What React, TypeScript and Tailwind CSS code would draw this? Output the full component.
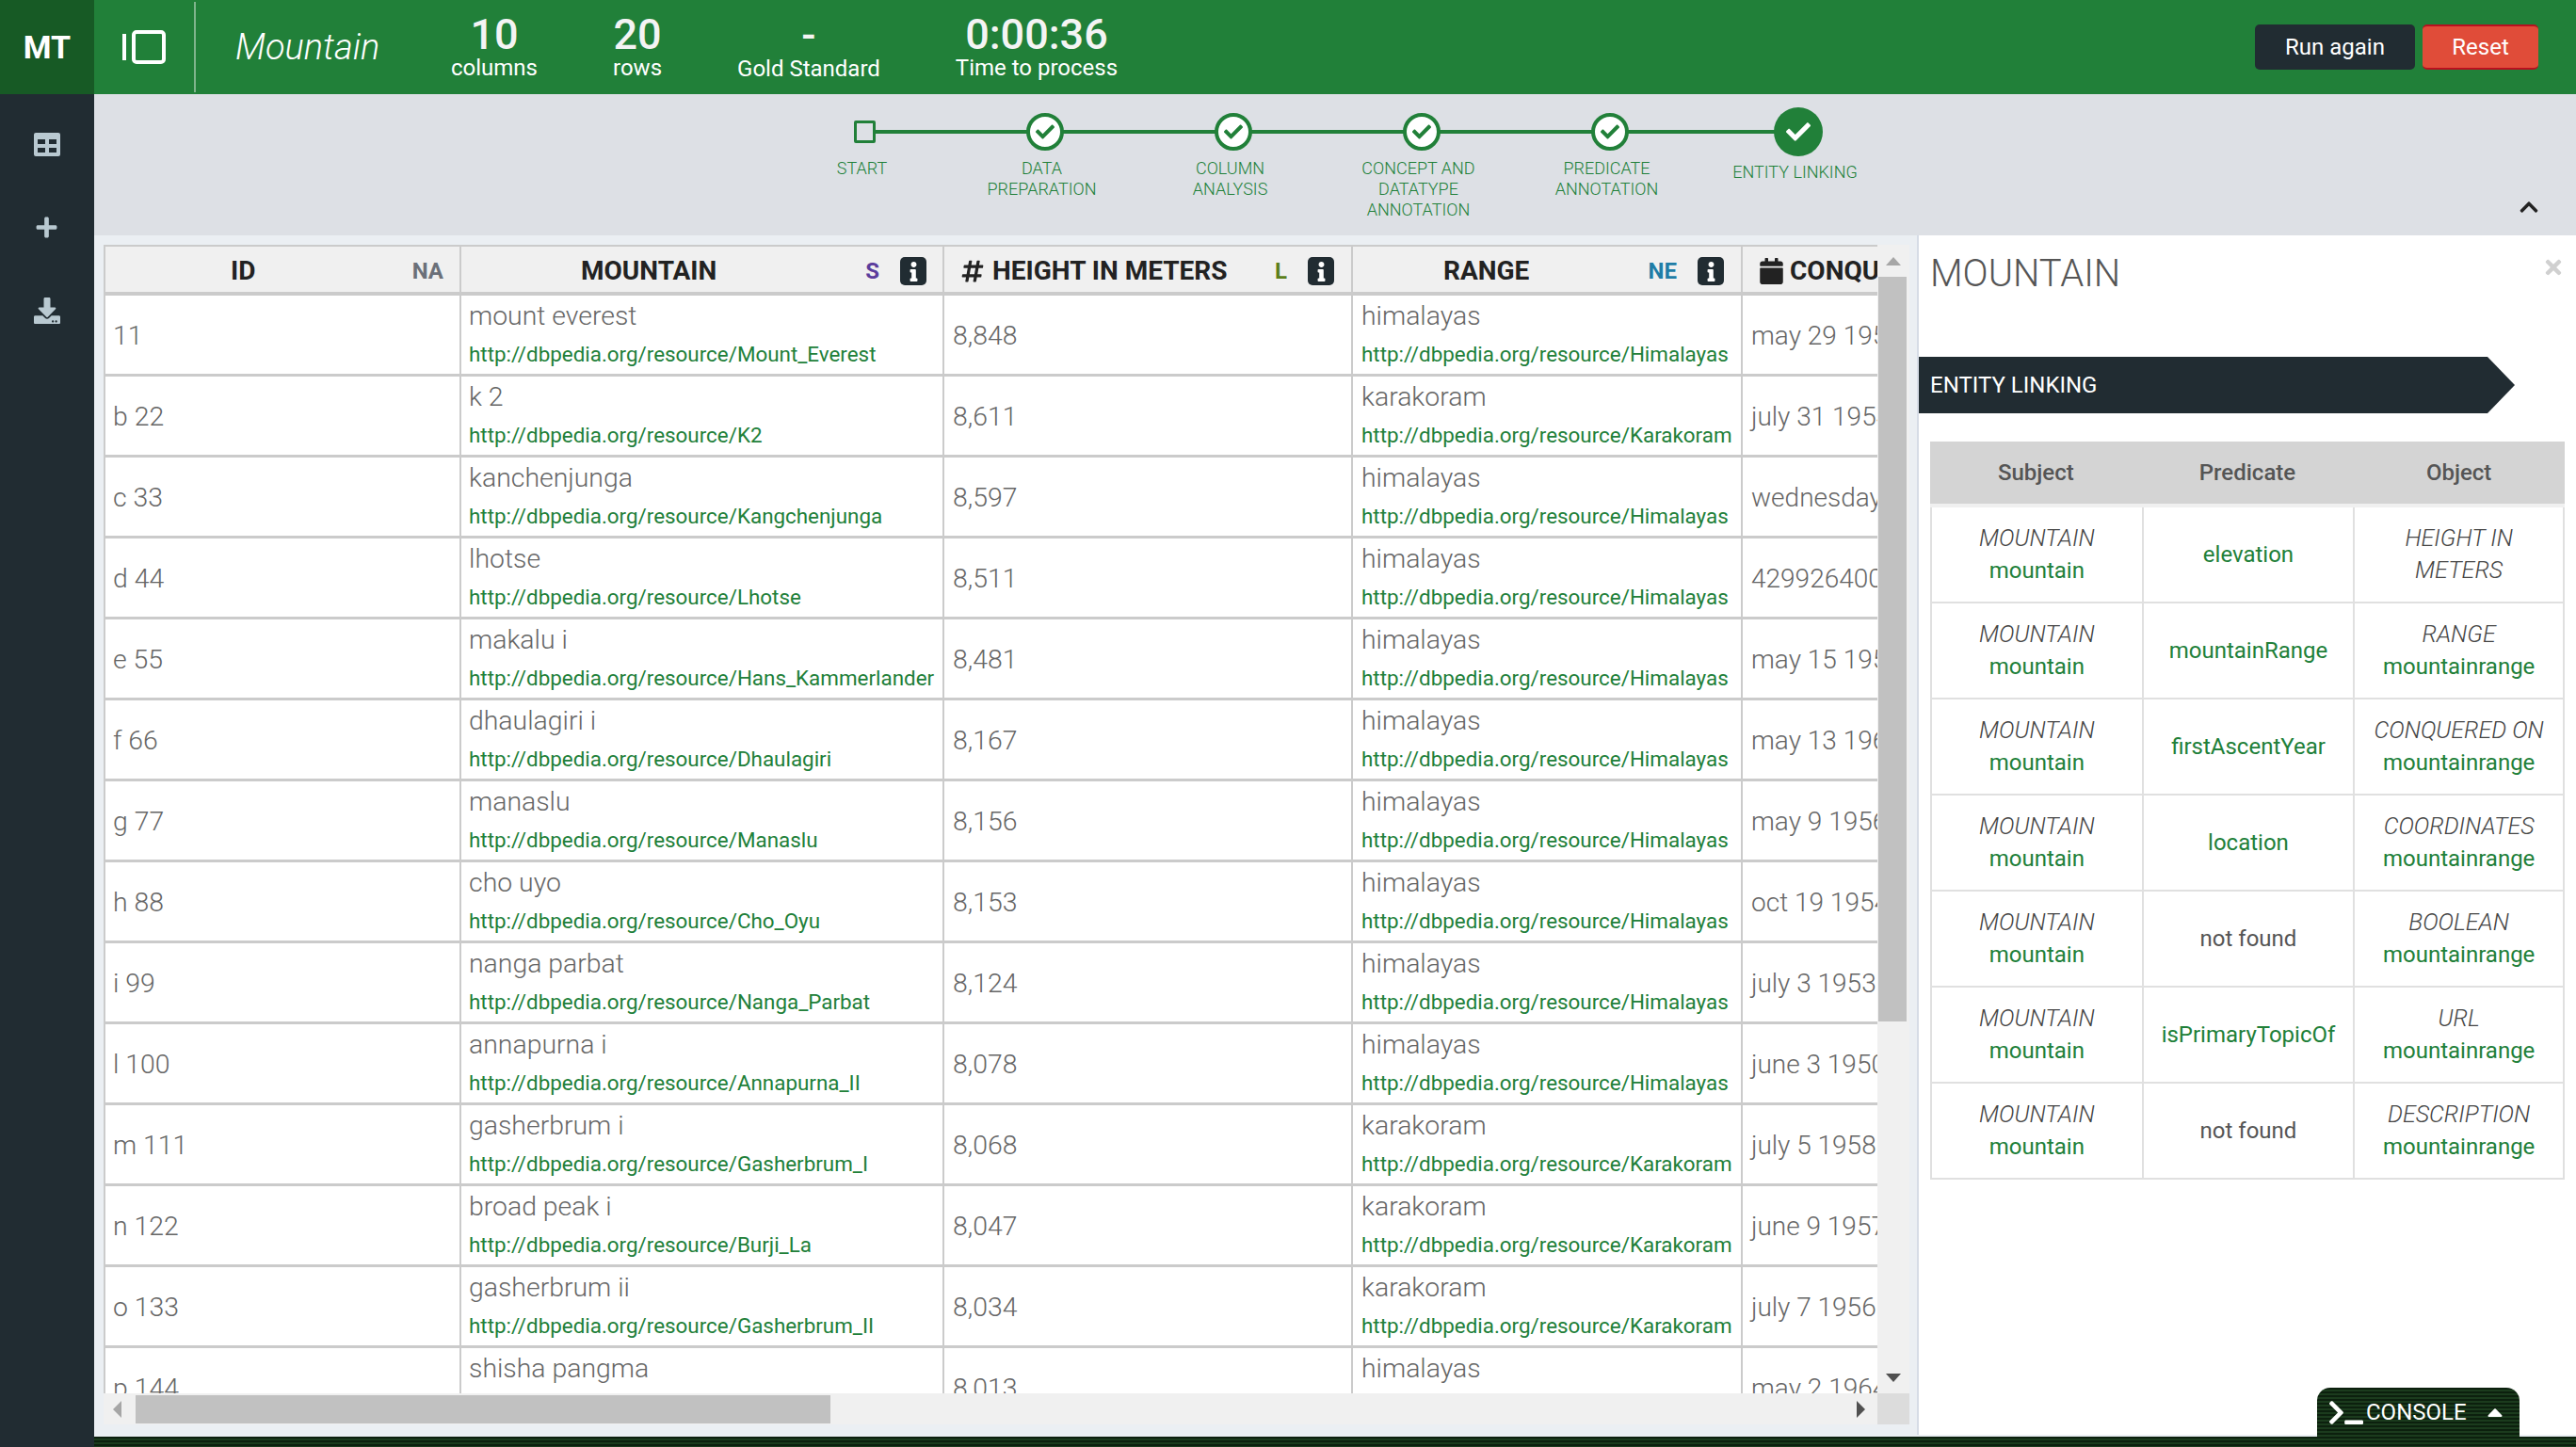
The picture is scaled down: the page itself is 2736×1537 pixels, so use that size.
import { FaCalendar, FaCaretUp, FaCheck, FaChevronUp, FaDownload, FaHashtag, FaInfo, FaPlus, FaTerminal, FaTimes } from "react-icons/fa";

const stats = [
  { value: "10", label: "columns" },
  { value: "20", label: "rows" },
  { value: "-", label: "Gold Standard" },
  { value: "0:00:36", label: "Time to process" },
];

const steps = [
  { label: "START", done: false },
  { label: "DATA\nPREPARATION", done: true },
  { label: "COLUMN\nANALYSIS", done: true },
  { label: "CONCEPT AND\nDATATYPE\nANNOTATION", done: true },
  { label: "PREDICATE\nANNOTATION", done: true },
  { label: "ENTITY LINKING", done: true },
];

const RES = "http://dbpedia.org/resource/";

const rows = [
  ["11", "mount everest", "Mount_Everest", "8,848", "himalayas", "Himalayas", "may 29 1953"],
  ["b 22", "k 2", "K2", "8,611", "karakoram", "Karakoram", "july 31 1954"],
  ["c 33", "kanchenjunga", "Kangchenjunga", "8,597", "himalayas", "Himalayas", "wednesday may 25"],
  ["d 44", "lhotse", "Lhotse", "8,511", "himalayas", "Himalayas", "429926400000"],
  ["e 55", "makalu i", "Hans_Kammerlander", "8,481", "himalayas", "Himalayas", "may 15 1955"],
  ["f 66", "dhaulagiri i", "Dhaulagiri", "8,167", "himalayas", "Himalayas", "may 13 1960"],
  ["g 77", "manaslu", "Manaslu", "8,156", "himalayas", "Himalayas", "may 9 1956"],
  ["h 88", "cho uyo", "Cho_Oyu", "8,153", "himalayas", "Himalayas", "oct 19 1954"],
  ["i 99", "nanga parbat", "Nanga_Parbat", "8,124", "himalayas", "Himalayas", "july 3 1953"],
  ["l 100", "annapurna i", "Annapurna_II", "8,078", "himalayas", "Himalayas", "june 3 1950"],
  ["m 111", "gasherbrum i", "Gasherbrum_I", "8,068", "karakoram", "Karakoram", "july 5 1958"],
  ["n 122", "broad peak i", "Burji_La", "8,047", "karakoram", "Karakoram", "june 9 1957"],
  ["o 133", "gasherbrum ii", "Gasherbrum_II", "8,034", "karakoram", "Karakoram", "july 7 1956"],
  ["p 144", "shisha pangma", "Shishapangma", "8,013", "himalayas", "Himalayas", "may 2 1964"],
];

const links = [
  { object: "HEIGHT IN METERS", predicate: "elevation", type: "" },
  { object: "RANGE", predicate: "mountainRange", type: "mountainrange" },
  { object: "CONQUERED ON", predicate: "firstAscentYear", type: "mountainrange" },
  { object: "COORDINATES", predicate: "location", type: "mountainrange" },
  { object: "BOOLEAN", predicate: "", type: "mountainrange" },
  { object: "URL", predicate: "isPrimaryTopicOf", type: "mountainrange" },
  { object: "DESCRIPTION", predicate: "", type: "mountainrange" },
];

const stripes =
  "bg-[repeating-linear-gradient(to_bottom,#0c200e_0,#0c200e_2px,#1b3b1d_2px,#1b3b1d_4px)]";

const headCell = "h-[54px] border-t-2 border-r-2 border-b-[4px] border-[#cbcbcb] bg-[#f0f0f0] p-0";
const bodyCell = "h-[86px] border-r-2 border-b-[3px] border-[#cbcbcb] bg-white text-[28.4px] font-light text-[#666]";
const nameLine = "mt-[4px] leading-[36px]";
const linkLine = "mt-[7px] text-[22.4px] leading-[30px] font-normal whitespace-nowrap text-[#218039]";

function InfoBadge() {
  return (
    <span className="flex h-[30px] w-[28px] items-center justify-center rounded-[5px] bg-[#212c32] text-white">
      <FaInfo className="h-[21px] w-[21px]" />
    </span>
  );
}

function TableIcon() {
  return (
    <svg width="28" height="25" viewBox="0 0 28 25" aria-hidden>
      <path
        fillRule="evenodd"
        fill="#b9c9d1"
        d="M2 0h24a2 2 0 0 1 2 2v21a2 2 0 0 1-2 2H2a2 2 0 0 1-2-2V2a2 2 0 0 1 2-2zM4 7v5h8V7zm12 0v5h8V7zM4 16v5h8v-5zm12 0v5h8v-5z"
      />
    </svg>
  );
}

function Topbar() {
  return (
    <header className="flex h-[100px] items-center bg-[#218039] text-white">
      <div className="flex h-full w-[100px] items-center justify-center bg-[#175a25] text-[34px] font-bold">MT</div>
      <div className="flex h-full w-[108px] items-center">
        <span className="ml-[30px] h-[28px] w-[4px] bg-white" />
        <span className="ml-[6px] h-[36px] w-[36px] rounded-[5px] border-[4px] border-white" />
        <span className="ml-auto h-[96px] w-[2px] bg-[#7fb48c]" />
      </div>
      <div className="ml-[42px] w-[229px] text-[38px] font-light italic">Mountain</div>
      <div className="flex gap-[80px] pb-[4px]">
        {stats.map((s) => (
          <div key={s.label} className="flex flex-col items-center">
            <span className="h-[48px] text-[45px] leading-[50px] font-medium text-[#f4f4f4]">{s.value}</span>
            <span className={`text-[24px] leading-[24px] ${s.value === "-" ? "mt-[1px]" : ""}`}>{s.label}</span>
          </div>
        ))}
      </div>
      <div className="ml-auto flex gap-[8px] pr-[40px] text-[24px]">
        <button className="h-[48px] w-[170px] rounded-[5px] bg-[#212c32]">Run again</button>
        <button className="h-[48px] w-[123px] rounded-[5px] border-y-2 border-[#b8101f] bg-[#e04c39]">Reset</button>
      </div>
    </header>
  );
}

function Stepper() {
  return (
    <div className="relative h-[150px] bg-[#dde0e5]">
      <div className="absolute top-[14px] left-[719px] flex text-[#218039]">
        <div className="absolute top-[24px] left-[100px] h-[4px] w-[992px] bg-[#218039]" />
        {steps.map((step, i) => (
          <div key={step.label} className={`relative flex w-[200px] flex-col items-center ${i === 0 ? "mr-[-9px]" : ""}`}>
            <div className="flex h-[52px] items-center">
              {i === 0 && <span className="mr-[2px] h-[24px] w-[23px] rounded-[2px] border-[3px] border-[#218039] bg-[#dde0e5]" />}
              {i > 0 && i < 5 && (
                <span className="flex h-[40px] w-[40px] items-center justify-center rounded-full border-[4px] border-[#218039] bg-white">
                  <FaCheck className="h-[20px] w-[20px]" />
                </span>
              )}
              {i === 5 && (
                <span className="flex h-[52px] w-[52px] items-center justify-center rounded-full bg-[#218039] text-white">
                  <FaCheck className="h-[26px] w-[26px]" />
                </span>
              )}
            </div>
            <div className={`pr-[7px] text-center text-[18px] leading-[22px] font-light whitespace-pre-line ${i === 5 ? "mt-[6px]" : "mt-[2px]"}`}>
              {step.label}
            </div>
          </div>
        ))}
      </div>
      <FaChevronUp className="absolute right-[39px] bottom-[19px] h-[22px] w-[22px] text-[#222]" />
    </div>
  );
}

function DataTable() {
  return (
    <table className="w-[2161px] table-fixed border-separate border-spacing-0">
      <colgroup>
        <col className="w-[380px]" />
        <col className="w-[513px]" />
        <col className="w-[434px]" />
        <col className="w-[414px]" />
        <col className="w-[420px]" />
      </colgroup>
      <thead>
        <tr className="text-[28px] font-medium text-[#222]">
          <th className={`${headCell} border-l-2`}>
            <div className="flex items-center pt-[4px] pr-[17px] pl-[133px]">
              <span className="w-[24px] text-center">ID</span>
              <span className="ml-auto text-[24px] text-[#6b7079]">NA</span>
            </div>
          </th>
          <th className={headCell}>
            <div className="flex items-center pt-[4px] pr-[17px] pl-[127px]">
              <span>MOUNTAIN</span>
              <span className="ml-auto text-[24px] text-[#5b3d9c]">S</span>
              <span className="ml-[22px]"><InfoBadge /></span>
            </div>
          </th>
          <th className={headCell}>
            <div className="flex items-center pt-[4px] pr-[18px] pl-[18px]">
              <FaHashtag className="h-[26px] w-[24px] shrink-0" />
              <span className="ml-[9px]">HEIGHT IN METERS</span>
              <span className="ml-auto text-[24px] text-[#5c7f1b]">L</span>
              <span className="ml-[22px]"><InfoBadge /></span>
            </div>
          </th>
          <th className={headCell}>
            <div className="flex items-center pt-[4px] pr-[18px] pl-[96px]">
              <span>RANGE</span>
              <span className="ml-auto text-[24px] text-[#1f7da6]">NE</span>
              <span className="ml-[22px]"><InfoBadge /></span>
            </div>
          </th>
          <th className={headCell}>
            <div className="flex items-center gap-[7px] pt-[4px] pl-[18px] text-left">
              <FaCalendar className="h-[28px] w-[25px] shrink-0" />
              <span>CONQUERED ON</span>
            </div>
          </th>
        </tr>
      </thead>
      <tbody>
        {rows.map((r) => (
          <tr key={r[0]}>
            <td className={`${bodyCell} border-l-2 px-[8px] pt-[3px]`}>{r[0]}</td>
            <td className={`${bodyCell} px-[8px] align-top`}>
              <div className={nameLine}>{r[1]}</div>
              <div className={linkLine}>{RES + r[2]}</div>
            </td>
            <td className={`${bodyCell} px-[9px] pt-[3px]`}>{r[3]}</td>
            <td className={`${bodyCell} px-[9px] align-top`}>
              <div className={nameLine}>{r[4]}</div>
              <div className={linkLine}>{RES + r[5]}</div>
            </td>
            <td className={`${bodyCell} px-[9px] pt-[3px] whitespace-nowrap`}>
              <span className="text-[28px]">{r[6]}</span>
            </td>
          </tr>
        ))}
      </tbody>
    </table>
  );
}

function TablePane() {
  return (
    <div className="flex w-[1936px] shrink-0 flex-col pt-[10px] pl-[10px]">
      <div className="flex h-[1220px]">
        <div className="w-[1884px] overflow-hidden">
          <DataTable />
        </div>
        <div className="flex w-[34px] flex-col items-center bg-[#f0f0f0]">
          <div className="flex h-[34px] items-center justify-center">
            <span className="h-0 w-0 border-x-[8px] border-b-[9px] border-x-transparent border-b-[#a6a6a6]" />
          </div>
          <div className="mr-[2px] h-[791px] w-[30px] bg-[#c1c1c1]" />
          <div className="mt-auto flex h-[34px] items-center justify-center">
            <span className="h-0 w-0 border-x-[8px] border-t-[9px] border-x-transparent border-t-[#505050]" />
          </div>
        </div>
      </div>
      <div className="flex h-[33px]">
        <div className="flex w-[1884px] items-center bg-[#f0f0f0]">
          <span className="ml-[10px] h-0 w-0 border-y-[9px] border-r-[9px] border-y-transparent border-r-[#a6a6a6]" />
          <div className="ml-[15px] h-[30px] w-[738px] bg-[#c1c1c1]" />
          <span className="mr-[13px] ml-auto h-0 w-0 border-y-[9px] border-l-[9px] border-y-transparent border-l-[#505050]" />
        </div>
        <div className="w-[34px] bg-[#dcdcdc]" />
      </div>
    </div>
  );
}

function EntityPanel() {
  return (
    <aside className="relative mb-[2px] flex-1 border-l-2 border-[#d6dce6] bg-white">
      <h2 className="h-[129px] pt-[19px] pl-[12px] text-[40px] leading-[44px] font-light text-[#555]">MOUNTAIN</h2>
      <FaTimes className="absolute top-[22px] right-[14px] h-[24px] w-[20px] text-[#d0d0d0]" />
      <div className="h-[60px] w-[633px] bg-[#212c32] pl-[12px] text-[24px] leading-[60px] text-white [clip-path:polygon(0_0,604px_0,100%_50%,604px_100%,0_100%)]">
        ENTITY LINKING
      </div>
      <table className="mt-[30px] ml-[12px] w-[674px] table-fixed border-separate border-spacing-0 text-center text-[24px] leading-[34px]">
        <thead>
          <tr className="bg-[#d4d4d4] font-medium text-[#555]">
            <th className="h-[66px] font-medium">Subject</th>
            <th className="h-[66px] font-medium">Predicate</th>
            <th className="h-[66px] font-medium">Object</th>
          </tr>
          <tr>
            <th colSpan={3} className="h-[4px] bg-[#f0f0f0] p-0" />
          </tr>
        </thead>
        <tbody>
          {links.map((row) => (
            <tr key={row.object}>
              <td className="h-[102px] border-b-2 border-l-2 border-[#e0e0e0]">
                <div className="text-[25px] font-light text-[#444] italic">MOUNTAIN</div>
                <div className="text-[#218039]">mountain</div>
              </td>
              <td className={`h-[102px] border-b-2 border-l-2 border-[#e0e0e0] ${row.predicate ? "text-[#218039]" : "text-[#555]"}`}>
                {row.predicate || "not found"}
              </td>
              <td className="h-[102px] border-x-2 border-b-2 border-[#e0e0e0] px-[12px]">
                <div className="text-[25px] font-light text-[#444] italic">{row.object}</div>
                {row.type && <div className="text-[#218039]">{row.type}</div>}
              </td>
            </tr>
          ))}
        </tbody>
      </table>
    </aside>
  );
}

export default function App() {
  return (
    <div className="flex h-[1537px] w-[2736px] flex-col overflow-hidden bg-[#212c32] font-['Roboto',sans-serif]">
      <Topbar />
      <div className="flex min-h-0 flex-1">
        <nav className="flex w-[100px] shrink-0 flex-col items-center pt-[41px] pr-[1px] text-[#b9c9d1]">
          <TableIcon />
          <FaPlus className="mt-[63px] h-[25px] w-[25px]" />
          <FaDownload className="mt-[62px] h-[28px] w-[28px]" />
        </nav>
        <main className="relative flex min-w-0 flex-1 flex-col bg-[#ebeff3]">
          <Stepper />
          <div className="flex min-h-0 flex-1">
            <TablePane />
            <EntityPanel />
          </div>
          <div className={`h-[11px] ${stripes}`} />
          <button className={`absolute right-[60px] bottom-[11px] flex h-[52px] w-[215px] items-center rounded-t-[14px] pl-[13px] text-[24px] text-white ${stripes}`}>
            <FaTerminal className="h-[29px] w-[36px]" />
            <span className="ml-[3px]">CONSOLE</span>
            <FaCaretUp className="ml-[17px] h-[26px] w-[26px]" />
          </button>
        </main>
      </div>
    </div>
  );
}
